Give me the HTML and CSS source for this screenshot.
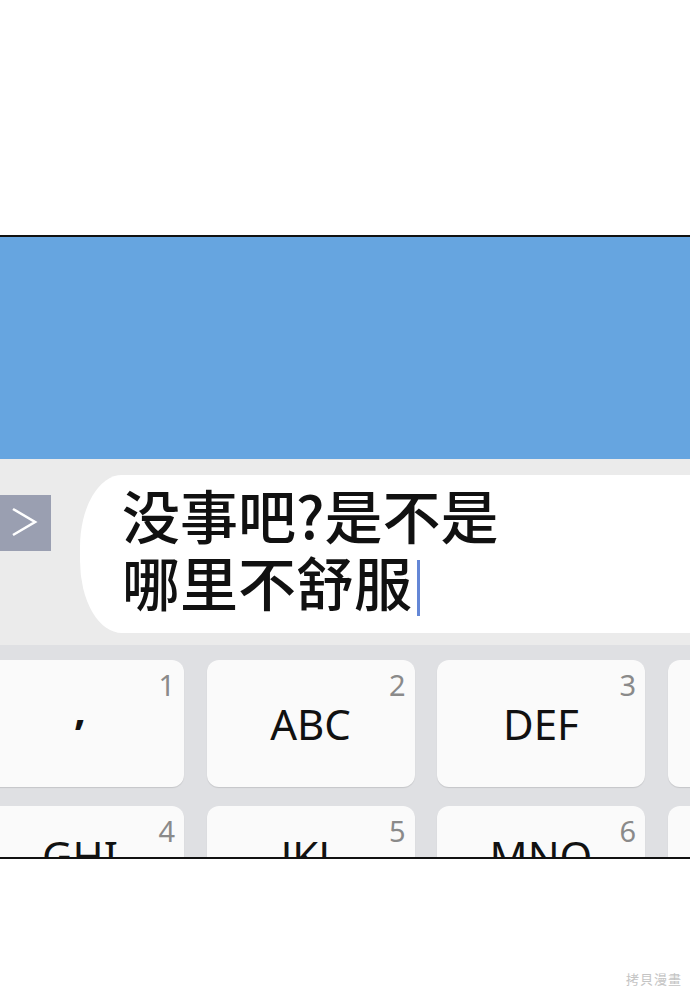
FILE: index.html
```html
<!DOCTYPE html>
<html lang="zh">
<head>
    <meta charset="UTF-8">
    <meta name="viewport" content="width=device-width, initial-scale=1.0">
    <title>没事吧</title>
    <link rel="stylesheet" href="styles.css">
</head>
<body>

<div class="panel">
    <!-- Cielo / zona superior -->
    <div class="sky"></div>

    <!-- Barra de escritura -->
    <div class="composer">
        <div class="arrow-box">
            <svg width="51" height="56" viewBox="0 0 51 56">
                <polyline points="13,14 35,27 13,40" fill="none" stroke="#fff" stroke-width="2.6" stroke-linejoin="miter"/>
            </svg>
        </div>
        <div class="bubble">
            <p class="message">没事吧?是不是<br>哪里不舒服<span class="cursor"></span></p>
        </div>
    </div>

    <!-- Teclado -->
    <div class="keyboard">
        <div class="key-row">
            <div class="key"><span class="num">1</span><span class="label comma">,</span></div>
            <div class="key"><span class="num">2</span><span class="label">ABC</span></div>
            <div class="key"><span class="num">3</span><span class="label">DEF</span></div>
            <div class="key"></div>
        </div>
        <div class="key-row row-two">
            <div class="key"><span class="num">4</span><span class="label">GHI</span></div>
            <div class="key"><span class="num">5</span><span class="label">JKL</span></div>
            <div class="key"><span class="num">6</span><span class="label">MNO</span></div>
            <div class="key"></div>
        </div>
    </div>
</div>

<div class="watermark">拷貝漫畫</div>

</body>
</html>
```

FILE: styles.css
```css
body {
    margin: 0;
    background-color: #fff;
    font-family: "Noto Sans", "Noto Sans CJK SC", sans-serif;
    width: 690px;
    height: 996px;
    overflow: hidden;
}
.panel {
    margin-top: 235px;
    height: 620px;
    border-top: 2px solid #111;
    border-bottom: 2px solid #111;
    overflow: hidden;
}
.sky {
    height: 222px;
    background-color: #66a5e0;
}
.composer {
    display: flex;
    align-items: flex-start;
    height: 186px;
    padding-top: 16px;
    box-sizing: border-box;
    background-color: #ebebeb;
}
.arrow-box {
    width: 51px;
    height: 56px;
    margin-top: 20px;
    background-color: #9a9fb1;
}
.arrow-box svg {
    display: block;
}
.bubble {
    flex: 1;
    height: 158px;
    margin-left: 29px;
    padding-left: 42px;
    box-sizing: border-box;
    background-color: #fff;
    border-radius: 42px 0 0 42px / 72px 0 0 72px;
}
.message {
    margin: 0;
    padding-top: 6px;
    font-family: "Noto Sans CJK SC", sans-serif;
    font-weight: 500;
    font-size: 58px;
    line-height: 67px;
    color: #111;
}
.cursor {
    display: inline-block;
    width: 3px;
    height: 56px;
    margin-left: 5px;
    vertical-align: -10px;
    background-color: #6487d6;
}
.keyboard {
    height: 212px;
    padding-top: 15px;
    box-sizing: border-box;
    background-color: #dfe0e3;
}
.key-row {
    display: flex;
    gap: 22.5px;
    margin-left: -24px;
}
.key-row + .key-row {
    margin-top: 19px;
}
.key {
    position: relative;
    flex: 0 0 208px;
    height: 127px;
    display: flex;
    align-items: center;
    justify-content: center;
    background-color: #fafafa;
    border-radius: 12px;
    box-shadow: 0 1px 1px rgba(0, 0, 0, 0.12);
}
.row-two .key {
    height: 100px;
}
.label {
    font-size: 42px;
    color: #111;
    line-height: 1;
}
.comma {
    font-weight: 700;
    margin-top: -30px;
}
.num {
    position: absolute;
    top: 10px;
    right: 9px;
    font-size: 29px;
    line-height: 1;
    color: #8a8a8a;
}
.watermark {
    position: absolute;
    right: 8px;
    top: 969px;
    font-family: "Noto Sans CJK TC", sans-serif;
    font-size: 13px;
    color: #c4c4c4;
    letter-spacing: 1px;
}
```
